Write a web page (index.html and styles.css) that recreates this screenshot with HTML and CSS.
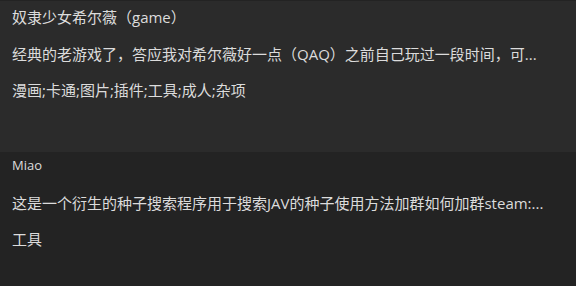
FILE: index.html
```html
<!DOCTYPE html>
<html lang="zh-CN">
<head>
  <meta charset="UTF-8" />
  <meta name="viewport" content="width=device-width, initial-scale=1" />
  <title>资源列表</title>
  <link rel="stylesheet" href="styles.css">
</head>
<body>

<!-- 列表 -->
<div class="list">
  <div class="card active">
    <div class="card-title">奴隶少女希尔薇（game）</div>
    <div class="card-desc">经典的老游戏了，答应我对希尔薇好一点（QAQ）之前自己玩过一段时间，可...</div>
    <div class="card-tags">漫画;卡通;图片;插件;工具;成人;杂项</div>
  </div>

  <div class="card">
    <div class="card-title author">Miao</div>
    <div class="card-desc">这是一个衍生的种子搜索程序用于搜索JAV的种子使用方法加群如何加群steam:...</div>
    <div class="card-tags">工具</div>
  </div>
</div>

</body>
</html>
```

FILE: styles.css
```css
* { box-sizing: border-box; }
body {
  margin: 0;
  background: #232323;
  font-family: "Open Sans", "Noto Sans CJK SC", sans-serif;
  color: #dcdcdc;
  overflow: hidden;
  text-autospace: no-autospace;
}
.list {
  display: flex;
  flex-direction: column;
}
.card {
  height: 152px;
  padding: 4px 12px 0;
  background: #232323;
}
.card.active {
  background: #2b2b2b;
  border-top: 1px solid #232323;
  padding-top: 3px;
}
.card-title {
  font-size: 15px;
  line-height: 20px;
  margin-top: 3px;
  margin-bottom: 17px;
  white-space: nowrap;
}
.card-title.author {
  font-size: 13px;
  line-height: 16px;
  margin-top: 1px;
  margin-bottom: 20px;
}
.card-desc {
  font-size: 15px;
  line-height: 20px;
  margin-bottom: 16px;
  white-space: nowrap;
}
.card-tags {
  font-size: 15px;
  line-height: 20px;
  white-space: nowrap;
}
```
